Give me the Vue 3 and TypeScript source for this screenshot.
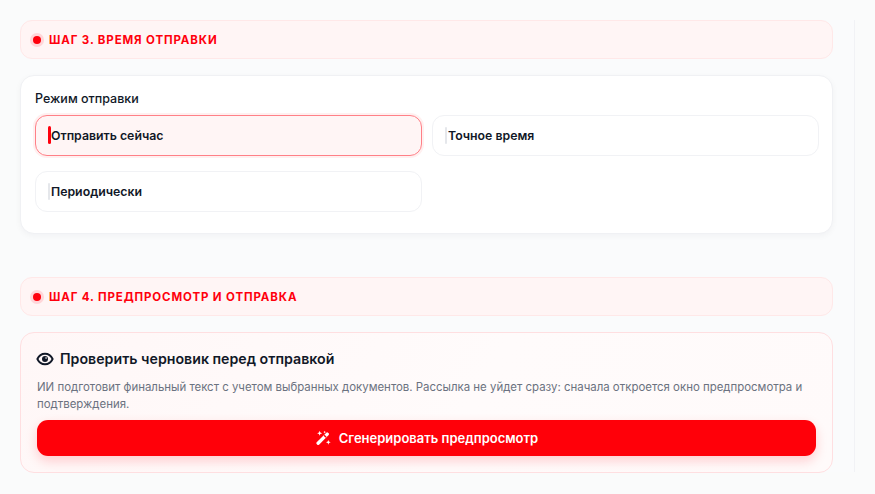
<script setup lang="ts">
const options = [
  { label: 'Отправить сейчас', active: true },
  { label: 'Точное время', active: false },
  { label: 'Периодически', active: false },
]
</script>

<template>
  <div class="page">
    <main class="column">
      <header class="step">
        <span class="dot"></span>
        <h2>ШАГ 3. ВРЕМЯ ОТПРАВКИ</h2>
      </header>
      <section class="card">
        <div class="label">Режим отправки</div>
        <div class="options">
          <div v-for="o in options" :key="o.label" class="option" :class="{ active: o.active }">
            <span class="bar"></span>
            <span>{{ o.label }}</span>
          </div>
        </div>
      </section>

      <header class="step step-four">
        <span class="dot"></span>
        <h2>ШАГ 4. ПРЕДПРОСМОТР И ОТПРАВКА</h2>
      </header>
      <section class="preview">
        <div class="title">
          <svg class="eye" viewBox="0 0 24 24" width="18" height="18">
            <path d="M1.800 12C4 7.300 7.800 5 12 5s8 2.300 10.200 7c-2.200 4.700-6 7-10.200 7S4 16.700 1.800 12z" fill="none" stroke="#111827" stroke-width="2.500" stroke-linejoin="round" />
            <circle cx="12" cy="12" r="4" fill="#111827" />
            <circle cx="13.400" cy="10.600" r="1.100" fill="#fff" />
          </svg>
          <h3>Проверить черновик перед отправкой</h3>
        </div>
        <p>ИИ подготовит финальный текст с учетом выбранных документов. Рассылка не уйдет сразу: сначала откроется окно предпросмотра и подтверждения.</p>
        <button type="button" class="generate">
          <svg class="wand" viewBox="0 0 24 24" width="16" height="16" fill="#fff">
            <path d="M2.500 18.500 17 4a1.800 1.800 0 0 1 2.500 0l1 1a1.800 1.800 0 0 1 0 2.500L6 22a1.800 1.800 0 0 1-2.500 0l-1-1a1.800 1.800 0 0 1 0-2.500z" />
            <path d="M12.800 8.700l1.500-1.500 3 3-1.500 1.500z" fill="#ff0009" />
            <path d="M7 1l1 2.800L10.800 5 8 6 7 8.800 6 6 3.200 5 6 3.800zM20 15l.9 2.400 2.600 1-2.600 1L20 22l-.9-2.600-2.600-1 2.600-1zM14.500 1l.6 1.500 1.500.5-1.500.6-.6 1.500-.6-1.500-1.500-.6 1.500-.5z" />
          </svg>
          <span>Сгенерировать предпросмотр</span>
        </button>
      </section>
    </main>
  </div>
</template>

<style scoped>
.page {
  box-sizing: border-box;
  width: 875px;
  height: 494px;
  padding: 20px 0 0 20px;
  background: #fafbfb;
  font-family: Inter, "Noto Sans", sans-serif;
  color: #111827;
  overflow: hidden;
}
.column {
  box-sizing: border-box;
  width: 835px;
  height: 452px;
  padding-right: 21px;
  border-right: 1px solid #f1f2f5;
  background: #fafbfc;
}
.step {
  box-sizing: border-box;
  height: 39px;
  display: flex;
  align-items: center;
  gap: 8px;
  padding-left: 12px;
  background: #fff5f5;
  border: 1px solid #ffe8e8;
  border-radius: 12px;
}
.step-four {
  margin-top: 43px;
}
.dot {
  width: 8px;
  height: 8px;
  border-radius: 50%;
  background: #ff000d;
  box-shadow: 0 0 0 3px #ffd6d9;
}
.step h2 {
  margin: 0;
  font-size: 11.500px;
  line-height: 16px;
  font-weight: 700;
  letter-spacing: 0.870px;
  color: #ff000d;
}
.card {
  box-sizing: border-box;
  height: 159px;
  margin-top: 16px;
  padding: 15px 14px 0;
  background: #fff;
  border: 1px solid #f0f1f4;
  border-radius: 14px;
  box-shadow: 0 2px 6px rgba(17, 24, 39, 0.04);
}
.label {
  font-size: 12.500px;
  line-height: 16px;
  font-weight: 500;
  color: #111827;
}
.options {
  display: grid;
  grid-template-columns: 386.500px 386.500px;
  column-gap: 10.500px;
  row-gap: 15.600px;
  margin-top: 8px;
}
.option {
  box-sizing: border-box;
  height: 40.500px;
  display: flex;
  align-items: center;
  gap: 1px;
  padding-left: 12px;
  background: #fff;
  border: 1px solid #f1f2f5;
  border-radius: 12px;
  font-size: 12.300px;
  font-weight: 600;
}
.option.active {
  background: #fff5f5;
  border-color: #ff8087;
  box-shadow: 0 0 0 2px #fff0f0;
}
.bar {
  width: 2px;
  height: 17px;
  border-radius: 2px;
  background: #e5e7eb;
}
.active .bar {
  background: #ff000d;
  width: 3px;
  height: 18px;
  margin-right: -1px;
}
.preview {
  box-sizing: border-box;
  height: 141px;
  margin-top: 16px;
  padding: 16px 16px 0;
  background: linear-gradient(120deg, #fff7f7 0%, #fffbfb 55%, #fffafa 100%);
  border: 1px solid #ffdfe1;
  border-radius: 14px;
}
.title {
  display: flex;
  align-items: center;
  gap: 6px;
  height: 20px;
}
.eye {
  flex: none;
  margin-left: -1px;
}
.title h3 {
  margin: 0;
  font-size: 14.200px;
  line-height: 20px;
  font-weight: 600;
  color: #111827;
}
.preview p {
  margin: 10px 0 0;
  font-size: 11.430px;
  line-height: 17px;
  color: #6b7280;
}
.generate {
  width: 779px;
  height: 36px;
  margin-top: 7px;
  display: flex;
  align-items: center;
  justify-content: center;
  gap: 8px;
  border: 0;
  border-radius: 11px;
  background: #ff0009;
  color: #fff;
  font-family: inherit;
  font-size: 13px;
  font-weight: 600;
  box-shadow: 0 5px 12px rgba(255, 10, 22, 0.18);
}
.wand {
  flex: none;
}
</style>
